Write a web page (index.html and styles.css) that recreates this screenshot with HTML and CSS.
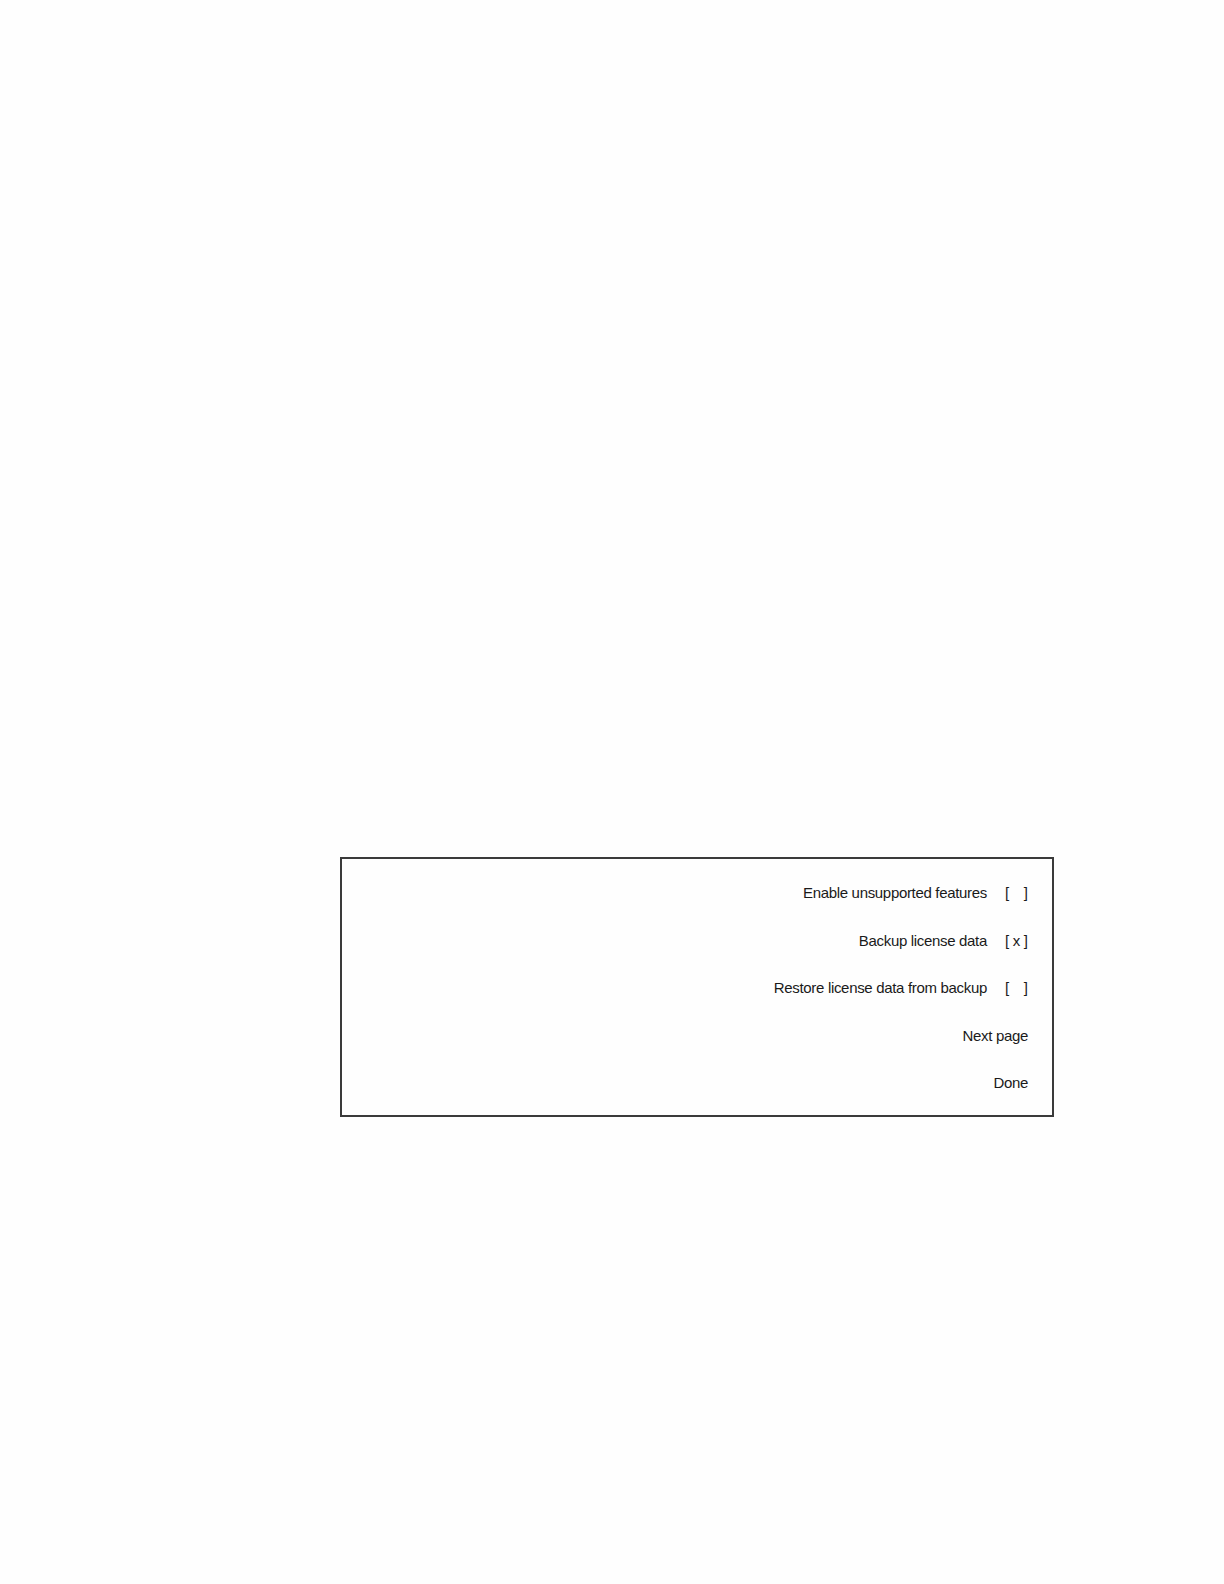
FILE: index.html
```html
<!DOCTYPE html>
<html>
<head>
<meta charset="utf-8">
<link rel="stylesheet" href="styles.css">
</head>
<body>
<div class="page">
  <div class="menu">
    <div class="row"><span class="label">Enable unsupported features</span><span class="box"><span>[</span><span></span><span>]</span></span></div>
    <div class="row"><span class="label">Backup license data</span><span class="box"><span>[</span><span>x</span><span>]</span></span></div>
    <div class="row"><span class="label">Restore license data from backup</span><span class="box"><span>[</span><span></span><span>]</span></span></div>
    <div class="row"><span class="label">Next page</span></div>
    <div class="row"><span class="label">Done</span></div>
  </div>
</div>
</body>
</html>
```
FILE: styles.css
```css
html, body { margin: 0; padding: 0; background: #fefefe; }
.page { padding-top: 857px; padding-left: 340px; }
.menu {
  box-sizing: border-box;
  width: 714px;
  border: 2px solid #3a3a3a;
  display: flex;
  flex-direction: column;
  align-items: flex-end;
  gap: 29.5px;
  padding: 25px 24px 23px 0;
  font-family: "Liberation Sans", Arial, sans-serif;
  font-size: 15px;
  letter-spacing: -0.32px;
  color: #1a1a1a;
}
.row { display: flex; align-items: center; line-height: 18px; height: 18px; }
.box { width: 23px; margin-left: 18px; display: flex; justify-content: space-between; letter-spacing: 0; }
```
